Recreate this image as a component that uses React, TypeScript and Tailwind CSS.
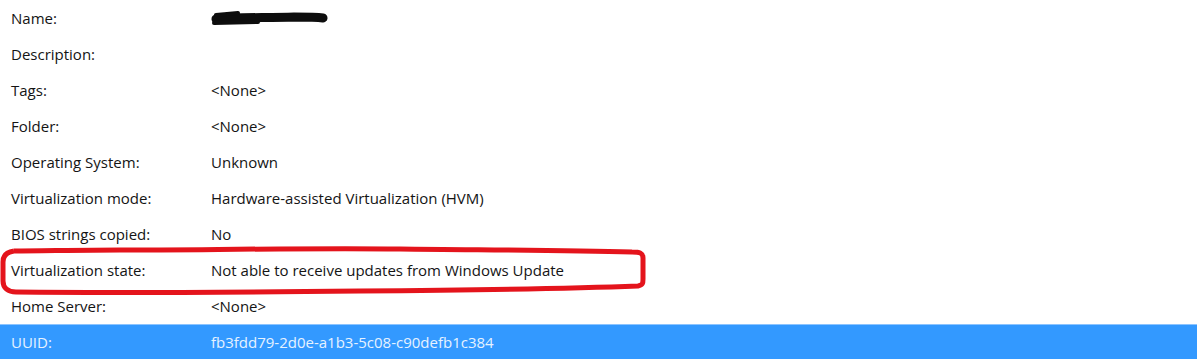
const rows: [string, string][] = [
  ["Name:", ""],
  ["Description:", ""],
  ["Tags:", "<None>"],
  ["Folder:", "<None>"],
  ["Operating System:", "Unknown"],
  ["Virtualization mode:", "Hardware-assisted Virtualization (HVM)"],
  ["BIOS strings copied:", "No"],
  ["Virtualization state:", "Not able to receive updates from Windows Update"],
  ["Home Server:", "<None>"],
];

// scribbled-out name
function Redaction() {
  return (
    <svg width="122" height="20" viewBox="0 0 122 20" className="block -ml-[3px]">
      <path
        d="M8 11 C 30 9, 60 10, 86 9 C 100 9, 108 9, 115 10"
        fill="none"
        stroke="#0d0d0d"
        strokeWidth="9"
        strokeLinecap="round"
      />
      <path
        d="M8 7 L 30 5 M 6 15 L 50 14"
        stroke="#0d0d0d"
        strokeWidth="4"
        strokeLinecap="round"
      />
    </svg>
  );
}

export default function App() {
  return (
    <div
      className="relative w-[1197px] h-[361px] overflow-hidden bg-white text-[15px] text-[#141414]"
      style={{ fontFamily: '"Open Sans", "Noto Sans", sans-serif' }}
    >
      <div className="flex flex-col">
        {rows.map(([label, value]) => (
          <div key={label} className="flex h-[36px] items-center pl-[11px]">
            <div className="w-[200px] shrink-0">{label}</div>
            <div>{label === "Name:" ? <Redaction /> : value}</div>
          </div>
        ))}
        <div className="flex h-[35px] items-center bg-[#3399ff] pl-[11px] text-[#e6f2ff] border-t border-[#8cc4ff]">
          <div className="w-[200px] shrink-0">UUID:</div>
          <div>fb3fdd79-2d0e-a1b3-5c08-c90defb1c384</div>
        </div>
      </div>

      <svg
        className="pointer-events-none absolute left-0 top-0"
        width="1197"
        height="361"
        viewBox="0 0 1197 361"
      >
        <path
          d="M14 251 C 6 252, 3 256, 3 262 L 3 281 C 3 288, 8 292, 16 292 C 120 293, 260 292, 360 291 C 480 290, 560 289, 638 286 C 643 285, 643 283, 643 279 L 643 258 C 643 253, 640 252, 632 252 C 560 250, 480 250, 400 249 C 300 248, 200 250, 120 250 C 80 250, 40 251, 14 251"
          fill="none"
          stroke="#e4141c"
          strokeWidth="5"
          strokeLinejoin="round"
        />
      </svg>
    </div>
  );
}
